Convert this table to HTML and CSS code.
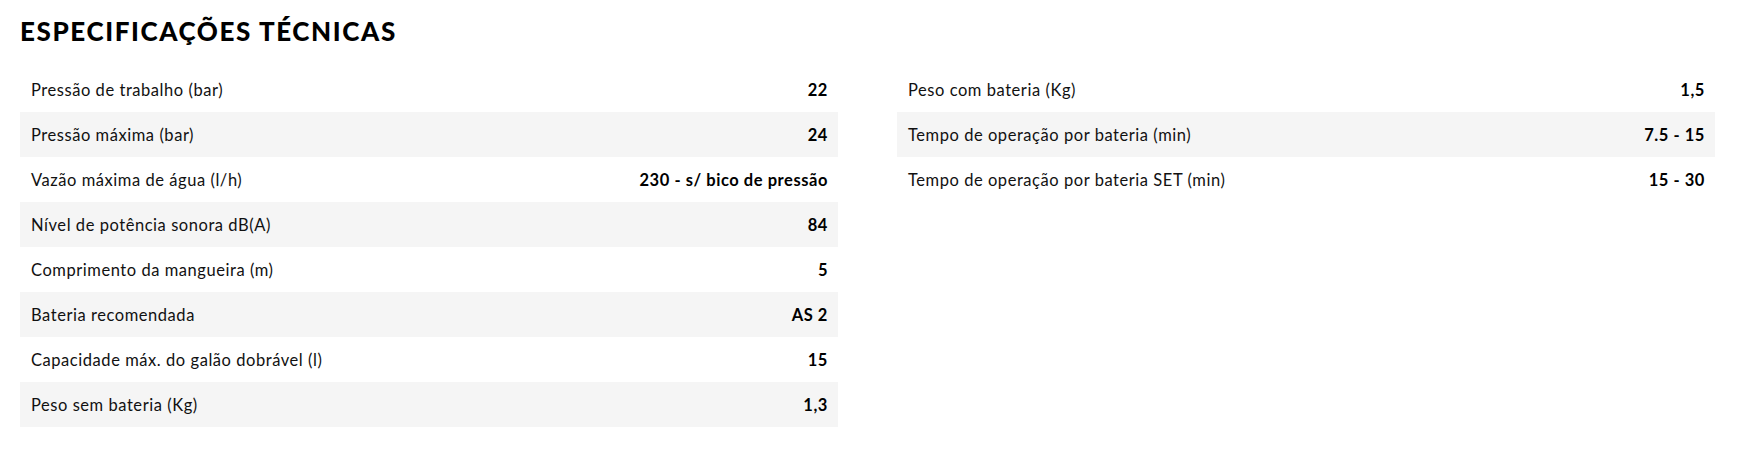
FILE: index.html
```html
<!DOCTYPE html>
<html lang="pt-BR">
<head>
<meta charset="utf-8">
<title>Especificações técnicas</title>
<link rel="stylesheet" href="styles.css">
</head>
<body>
<section class="specs">
  <h2 class="specs-title">ESPECIFICAÇÕES TÉCNICAS</h2>
  <div class="specs-grid">
    <ul class="spec-list">
      <li class="spec-row"><span class="spec-label">Pressão de trabalho (bar)</span><span class="spec-value">22</span></li>
      <li class="spec-row"><span class="spec-label">Pressão máxima (bar)</span><span class="spec-value">24</span></li>
      <li class="spec-row"><span class="spec-label">Vazão máxima de água (l/h)</span><span class="spec-value">230 - s/ bico de pressão</span></li>
      <li class="spec-row"><span class="spec-label">Nível de potência sonora dB(A)</span><span class="spec-value">84</span></li>
      <li class="spec-row"><span class="spec-label">Comprimento da mangueira (m)</span><span class="spec-value">5</span></li>
      <li class="spec-row"><span class="spec-label">Bateria recomendada</span><span class="spec-value">AS 2</span></li>
      <li class="spec-row"><span class="spec-label">Capacidade máx. do galão dobrável (l)</span><span class="spec-value">15</span></li>
      <li class="spec-row"><span class="spec-label">Peso sem bateria (Kg)</span><span class="spec-value">1,3</span></li>
    </ul>
    <ul class="spec-list">
      <li class="spec-row"><span class="spec-label">Peso com bateria (Kg)</span><span class="spec-value">1,5</span></li>
      <li class="spec-row"><span class="spec-label">Tempo de operação por bateria (min)</span><span class="spec-value">7.5 - 15</span></li>
      <li class="spec-row"><span class="spec-label">Tempo de operação por bateria SET (min)</span><span class="spec-value">15 - 30</span></li>
    </ul>
  </div>
</section>
</body>
</html>
```
FILE: styles.css
```css
* { box-sizing: border-box; }
html, body { margin: 0; padding: 0; background: #fff; }
body {
  font-family: Lato, "Noto Sans", "Liberation Sans", sans-serif;
  color: #111;
}
.specs {
  padding: 0 37px 0 20px;
}
.specs-title {
  margin: 0;
  padding-top: 15px;
  height: 67px;
  font-size: 26px;
  line-height: 32px;
  font-weight: 900;
  letter-spacing: 1.6px;
  color: #000;
}
.specs-grid {
  display: grid;
  grid-template-columns: 818px 818px;
  column-gap: 59px;
  align-items: start;
}
.spec-list {
  list-style: none;
  margin: 0;
  padding: 0;
}
.spec-row {
  display: flex;
  justify-content: space-between;
  align-items: center;
  height: 45px;
  padding: 0 10px 0 11px;
  font-size: 16.5px;
  letter-spacing: 0.55px;
}
.spec-row:nth-child(even) {
  background: #f5f5f5;
}
.spec-label {
  font-weight: 400;
}
.spec-value {
  font-weight: 700;
  color: #000;
}
```
